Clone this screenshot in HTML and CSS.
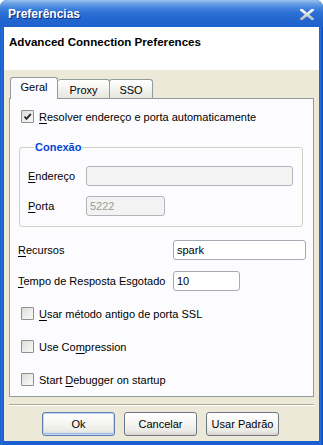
FILE: index.html
```html
<!DOCTYPE html>
<html lang="pt">
<head>
<meta charset="utf-8">
<link rel="stylesheet" href="styles.css">
</head>
<body>
<div class="window">
  <div class="titlebar">
    <span class="title">Preferências</span>
    <svg class="close" width="14" height="11" viewBox="0 0 14 11">
      <defs>
        <linearGradient id="xg" x1="0" y1="0" x2="0" y2="1">
          <stop offset="0" stop-color="#ffffff"/>
          <stop offset="1" stop-color="#b8bcc4"/>
        </linearGradient>
      </defs>
      <path d="M1.5 1 L12.5 10 M12.5 1 L1.5 10" stroke="url(#xg)" stroke-width="2.8" stroke-linecap="square" fill="none"/>
    </svg>
  </div>
  <div class="client">
    <div class="header">Advanced Connection Preferences</div>
    <div class="content">
      <div class="tabs">
        <div class="tab active">Geral</div>
        <div class="tab tab-proxy">Proxy</div>
        <div class="tab tab-sso">SSO</div>
      </div>
      <div class="panel">
        <label class="check first">
          <span class="box checked">
            <svg width="11" height="11" viewBox="0 0 11 11"><path d="M2.5 5.5 L4.5 7.8 L8.8 3" stroke="#2b2b2b" stroke-width="1.9" fill="none"/></svg>
          </span>
          <span><u>R</u>esolver endereço e porta automaticamente</span>
        </label>

        <fieldset class="group">
          <legend>Conexão</legend>
          <div class="grow">
            <span class="glabel"><u>E</u>ndereço</span>
            <span class="field disabled wide"></span>
          </div>
          <div class="grow">
            <span class="glabel"><u>P</u>orta</span>
            <span class="field disabled short">5222</span>
          </div>
        </fieldset>

        <div class="frow recursos">
          <span class="flabel"><u>R</u>ecursos</span>
          <span class="field res">spark</span>
        </div>
        <div class="frow tempo">
          <span class="flabel"><u>T</u>empo de Resposta Esgotado</span>
          <span class="field tmo">10</span>
        </div>

        <label class="check opt">
          <span class="box"></span>
          <span><u>U</u>sar método antigo de porta SSL</span>
        </label>
        <label class="check opt">
          <span class="box"></span>
          <span>Use Co<u>m</u>pression</span>
        </label>
        <label class="check opt">
          <span class="box"></span>
          <span>Start <u>D</u>ebugger on startup</span>
        </label>
      </div>
      <div class="separator"></div>
      <div class="buttons">
        <button class="btn default">Ok</button>
        <button class="btn">Cancelar</button>
        <button class="btn">Usar Padrão</button>
      </div>
    </div>
  </div>
</div>
</body>
</html>
```
FILE: styles.css
```css
* { box-sizing: border-box; }
html, body { margin: 0; padding: 0; background: #ffffff; }
body {
  font-family: "Liberation Sans", Arial, sans-serif;
  font-size: 11px;
  color: #000;
}
.window {
  width: 323px;
  height: 445px;
  display: flex;
  flex-direction: column;
  background: linear-gradient(to right, #0b4fc2 0, #2a72dc 1px, #1b60cf 3px, #1b60cf 319px, #2a72dc 321px, #0b4fc2 322px);
  border-radius: 7px 7px 0 0;
  overflow: hidden;
}
.titlebar {
  height: 27px;
  flex: none;
  display: flex;
  align-items: center;
  justify-content: space-between;
  padding: 0 9px 0 8px;
  background: linear-gradient(to bottom, #9cc3f0 0, #6ea4e6 3px, #4a8ae0 7px, #2f72d6 12px, #2467d0 18px, #1f60cc 27px);
}
.title {
  color: #fff;
  font-weight: bold;
  font-size: 12px;
  text-shadow: 1px 1px 0 #0b2f7a;
  margin-top: 1px;
}
.close { display: block; margin-top: 1px; }
.client {
  flex: 1;
  margin: 0 4px 4px 4px;
  background: #ece9d8;
  display: flex;
  flex-direction: column;
}
.header {
  height: 43px;
  flex: none;
  background: #ffffff;
  font-weight: bold;
  font-size: 11.6px;
  padding: 8px 0 0 5px;
}
.content {
  flex: 1;
  padding: 7px 5px 0 5px;
  display: flex;
  flex-direction: column;
}
.tabs {
  height: 21px;
  display: flex;
  align-items: flex-end;
  padding-left: 1px;
  position: relative;
  z-index: 1;
}
.tab {
  height: 19px;
  border: 1px solid #919b9c;
  border-bottom: none;
  border-radius: 3px 3px 0 0;
  background: linear-gradient(to bottom, #ffffff 0, #f6f6f3 40%, #e6e6de 100%);
  display: flex;
  align-items: center;
  justify-content: center;
  padding-top: 2px;
}
.tab.active {
  width: 48px;
  height: 22px;
  margin-bottom: -1px;
  background: #fcfcfe;
  padding-top: 0;
  padding-bottom: 3px;
}
.tab-proxy { width: 52px; border-left: none; }
.tab-sso { width: 44px; border-left: 1px solid #919b9c; margin-left: -1px; }
.panel {
  height: 299px;
  flex: none;
  background: #fcfcfe;
  border: 1px solid #919b9c;
  padding: 11px 7px 0 8px;
  display: flex;
  flex-direction: column;
}
.check {
  display: flex;
  align-items: center;
  height: 13px;
  margin-left: 3px;
}
.box {
  width: 13px;
  height: 13px;
  flex: none;
  border: 1px solid #8f8f8f;
  border-radius: 1px;
  background: linear-gradient(to bottom right, #dcdcd4 0, #ececea 50%, #f8f8f8 100%);
  margin-right: 5px;
  display: flex;
  align-items: center;
  justify-content: center;
}
.box svg { display: block; }
.group {
  margin: 18px 3px 0 1px;
  padding: 12px 9px 10px 8px;
  border: 1px solid #d0d0c8;
  border-radius: 3px;
  min-width: 0;
}
.group legend {
  color: #0046d5;
  font-weight: bold;
  padding: 0 1px;
  margin-left: 6px;
  line-height: 13px;
}
.grow {
  display: flex;
  align-items: center;
  height: 20px;
}
.grow + .grow { margin-top: 10px; }
.glabel { width: 58px; flex: none; }
.field {
  height: 20px;
  border: 1px solid #a5abb3;
  border-radius: 3px;
  background: #ffffff;
  display: flex;
  align-items: center;
  padding-left: 3px;
}
.field.disabled {
  background: #f3f3f3;
  border-color: #b1b5ba;
  color: #9a9a9a;
}
.wide { flex: 1; }
.short { width: 79px; }
.frow {
  display: flex;
  align-items: center;
  height: 20px;
}
.flabel { width: 155px; flex: none; }
.recursos { margin-top: 13px; }
.tempo { margin-top: 11px; }
.res { flex: 1; }
.tmo { width: 67px; }
.opt { margin-top: 20px; }
.opt + .opt { margin-top: 20px; }
.tempo + .opt { margin-top: 16px; }
.separator {
  margin-top: 7px;
  height: 2px;
  border-top: 1px solid #aca899;
  border-bottom: 1px solid #ffffff;
}
.buttons {
  display: flex;
  justify-content: center;
  gap: 9px;
  margin-top: 6px;
  padding-right: 2px;
}
.btn {
  width: 73px;
  height: 24px;
  font-family: inherit;
  font-size: 11px;
  color: #000;
  border: 1px solid #6f7882;
  border-radius: 3px;
  background: linear-gradient(to bottom, #ffffff 0, #f7f7f4 40%, #ecebe6 80%, #d8d5cc 100%);
  padding: 0;
}
.btn.default {
  border-color: #5c7fb0;
  box-shadow: inset 0 0 0 1px #c2d6f5, inset 0 -1px 0 1px #9ab8e8;
}
u { text-decoration: underline; text-underline-offset: 2px; }
```
